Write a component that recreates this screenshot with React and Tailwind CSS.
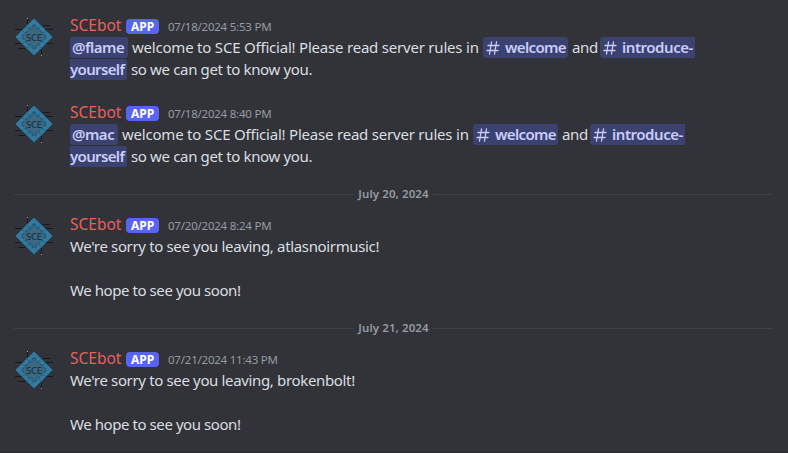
import React from "react";

function Avatar() {
  return (
    <svg className="mt-[2px] h-10 w-10 shrink-0" viewBox="0 0 40 40" fill="none">
      <g stroke="#17191c" strokeWidth="1">
        <path d="M13.500 1v11M1 12.500h13M24 8.500h12M27 12.500h12M1 26.500h12M27 26.500h12M4 31.500h14M27.500 28v10" />
      </g>
      <path d="M13.500 1v1M27.500 38v1" stroke="#a0a4a8" />
      <path d="M20 1.200 39 20 20 38.800 1 20Z" fill="#35799e" stroke="#1c3e50" strokeWidth="0.800" />
      <path d="M20 7.500 32.500 20 20 32.500 7.500 20Z" fill="#3c6880" stroke="#285a76" strokeWidth="1.500" strokeDasharray="3 1.500" />
      <path d="M12 8l5 5 3-3 3 3 5-5M12 32l5-5 3 3 3-3 5 5M8 13l4 4M32 13l-4 4M8 27l4-4M32 27l-4-4" stroke="#23648a" strokeWidth="1" />
      <text x="20" y="23.600" textAnchor="middle" textLength="16" className="fill-[#142a38] font-['Noto_Sans'] text-[9.500px]">SCE</text>
    </svg>
  );
}

function Message({ time, children }) {
  return (
    <article className="flex gap-4 pl-[14px]">
      <Avatar />
      <div className="min-w-0">
        <header className="flex h-[22px] items-center whitespace-nowrap">
          <span className="w-[56px] text-[15.500px] text-[#e8605c]">SCEbot</span>
          <span className="mt-px flex h-[15px] w-[33px] items-center justify-center rounded-[4px] bg-[#5865f2] text-[12px] font-bold leading-[15px] text-white">APP</span>
          <span className="ml-[9px] mt-[2px] text-[11.500px] tracking-[-0.220px] text-[#949ba4]">{time}</span>
        </header>
        {children}
      </div>
    </article>
  );
}

function Line({ children }) {
  return <div className="flex h-[22px] items-start whitespace-nowrap text-[15px] leading-[20px]">{children}</div>;
}

function Hash() {
  return (
    <svg className="ml-[3px] mr-[5px] mt-[4px] h-[14px] w-[14px] shrink-0" viewBox="0 0 14 14" fill="none" stroke="#c9cdfb" strokeWidth="1.300" strokeLinecap="round">
      <path d="M5.500 1 3.500 13M10.500 1 8.500 13M2 4.500h11M1 9.500h11" />
    </svg>
  );
}

const chip = "flex h-[21px] bg-[#3c4270] text-[15px] font-semibold leading-[20px] text-[#c9cdfb]";

function Welcome({ name, width, time }) {
  return (
    <Message time={time}>
      <Line>
        <span className={`${chip} ${width} rounded-[3px] pl-[2px] tracking-[-0.500px]`}>{name}</span>
        <span className="w-[355px] pl-[4px] tracking-[-0.210px]">welcome to SCE Official! Please read server rules in</span>
        <span className={`${chip} w-[85px] rounded-[3px] tracking-[-0.650px]`}><Hash />welcome</span>
        <span className="w-[32px] pl-[4px] tracking-[-0.400px]">and</span>
        <span className={`${chip} w-[95px] rounded-l-[3px] tracking-[-0.450px]`}><Hash />introduce-</span>
      </Line>
      <Line>
        <span className={`${chip} w-[57px] rounded-r-[3px] tracking-[-0.650px]`}>yourself</span>
        <span className="pl-[4px] tracking-[-0.350px]">so we can get to know you.</span>
      </Line>
    </Message>
  );
}

function Goodbye({ user, time }) {
  return (
    <Message time={time}>
      <Line><span className="tracking-[-0.350px]">We're sorry to see you leaving, {user}!</span></Line>
      <Line />
      <Line><span className="tracking-[-0.430px]">We hope to see you soon!</span></Line>
    </Message>
  );
}

function DateDivider({ children }) {
  return (
    <div className="ml-[14px] mr-[15px] flex h-[13px] items-center">
      <span className="h-px flex-1 bg-[#3f4147]" />
      <span className="flex w-[79px] justify-center whitespace-nowrap pb-[2px] text-[11.500px] font-semibold leading-[11px] tracking-[0.100px] text-[#949ba4]">{children}</span>
      <span className="h-px flex-1 bg-[#3f4147]" />
    </div>
  );
}

export default function App() {
  return (
    <main className="flex h-[453px] w-[788px] flex-col overflow-hidden border-b border-[#2b2830] bg-[#313338] pt-[15px] font-['Noto_Sans',sans-serif] text-[#dbdee1]">
      <Welcome name="@flame" width="w-[58px]" time="07/18/2024 5:53 PM" />
      <div className="h-[21px]" />
      <Welcome name="@mac" width="w-[48px]" time="07/18/2024 8:40 PM" />
      <div className="h-[20px]" />
      <DateDivider>July 20, 2024</DateDivider>
      <div className="h-[13px]" />
      <Goodbye user="atlasnoirmusic" time="07/20/2024 8:24 PM" />
      <div className="h-[20px]" />
      <DateDivider>July 21, 2024</DateDivider>
      <div className="h-[13px]" />
      <Goodbye user="brokenbolt" time="07/21/2024 11:43 PM" />
    </main>
  );
}
